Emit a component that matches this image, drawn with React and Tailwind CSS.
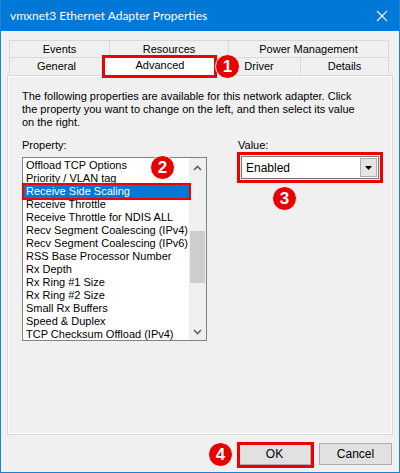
import React from 'react';

const items = [
  'Offload TCP Options',
  'Priority / VLAN tag',
  'Receive Side Scaling',
  'Receive Throttle',
  'Receive Throttle for NDIS ALL',
  'Recv Segment Coalescing (IPv4)',
  'Recv Segment Coalescing (IPv6)',
  'RSS Base Processor Number',
  'Rx Depth',
  'Rx Ring #1 Size',
  'Rx Ring #2 Size',
  'Small Rx Buffers',
  'Speed & Duplex',
  'TCP Checksum Offload (IPv4)',
];

function Badge({ n, className }) {
  return (
    <div className={`absolute w-[25px] h-[25px] rounded-full bg-[#e60000] border border-white text-white flex items-center justify-center text-[17px] font-bold leading-none ${className}`} style={{ fontFamily: '"Liberation Sans", Arial, sans-serif' }}>
      {n}
    </div>
  );
}

function Tab({ label, w, last }) {
  return (
    <div className={`h-[17px] ${w} border-t border-l border-[#d9d9d9] ${last ? 'border-r' : ''} flex items-center justify-center`}>
      {label}
    </div>
  );
}

export default function App() {
  const font = { fontFamily: '"Liberation Sans", Arial, sans-serif' };
  return (
    <div className="w-[400px] h-[473px] bg-[#1883d7] px-px pb-px flex flex-col text-[11px] text-black" style={font}>
      {/* title bar */}
      <div className="h-[31px] bg-[#0078d7] flex items-center justify-between pl-[9px] pr-[11px] text-white">
        <span className="text-[12px]" style={{ fontFamily: 'Lato, "Liberation Sans", sans-serif' }}>vmxnet3 Ethernet Adapter Properties</span>
        <svg width="12" height="12" viewBox="0 0 12 12" stroke="white" strokeWidth="1.1">
          <path d="M1 1L11 11M11 1L1 11" />
        </svg>
      </div>

      <div className="flex-1 bg-[#f0f0f0] flex flex-col pt-[9px] px-[6px]">
        {/* tabs */}
        <div className="px-[2px] flex flex-col">
          <div className="flex">
            <Tab label="Events" w="w-[100px]" />
            <Tab label="Resources" w="w-[119px]" />
            <Tab label="Power Management" w="w-[161px]" last />
          </div>
          <div className="flex">
            <Tab label="General" w="w-[94px]" />
            <div className="relative w-[114px] h-[17px]">
              <div className="absolute left-0 right-0 top-[-1px] h-[20px] bg-white border-t border-l border-r border-[#d9d9d9] flex items-center justify-center z-10 pb-[3px]">
                Advanced
              </div>
              <div className="absolute left-[-1px] top-[-2px] w-[115px] h-[23px] border-[3px] border-[#ee0000] z-20" />
              <Badge n="1" className="left-[112px] top-[-3px] z-30" />
            </div>
            <Tab label="Driver" w="w-[83px]" />
            <Tab label="Details" w="w-[89px]" last />
          </div>
        </div>

        {/* panel */}
        <div className="h-[360px] mt-px border border-[#d9d9d9] shadow-[inset_1px_1px_0_#ffffff,inset_-1px_-1px_0_#ffffff] pt-[14px] pl-[14px] pr-[12px] flex flex-col">
          <p className="leading-[13px] whitespace-nowrap">
            The following properties are available for this network adapter. Click<br />
            the property you want to change on the left, and then select its value<br />
            on the right.
          </p>

          <div className="flex mt-[10px]">
            <div className="flex flex-col">
              <div className="leading-[13px] h-[13px]">Property:</div>
              <div className="relative mt-[5px] w-[185px] h-[184px] border border-[#828282] bg-white flex">
                <div className="flex-1 flex flex-col pt-[1px]">
                  {items.map((it, i) => (
                    <div key={it} className={`h-[13px] leading-[13px] pl-[3px] whitespace-nowrap ${i === 2 ? 'bg-[#0078d7] text-white' : ''}`}>
                      {it}
                    </div>
                  ))}
                </div>
                <div className="w-[17px] bg-[#f0f0f0] flex flex-col items-center">
                  <div className="h-[17px] flex items-center justify-center mt-[1px]">
                    <svg width="9" height="6" viewBox="0 0 9 6" fill="none" stroke="#606060" strokeWidth="1.6"><path d="M1 5L4.5 1.5L8 5" /></svg>
                  </div>
                  <div className="mt-[55px] w-[15px] h-[52px] bg-[#cdcdcd]" />
                  <div className="flex-1" />
                  <div className="h-[17px] flex items-center justify-center">
                    <svg width="9" height="6" viewBox="0 0 9 6" fill="none" stroke="#606060" strokeWidth="1.6"><path d="M1 1L4.5 4.5L8 1" /></svg>
                  </div>
                </div>
                <div className="absolute left-[-1px] top-[25px] w-[169px] h-[17px] border-[2px] border-[#ee0000]" />
                <Badge n="2" className="left-[127px] top-[-3px]" />
              </div>
            </div>

            <div className="ml-[30px] flex flex-col">
              <div className="leading-[13px] h-[13px] ml-px">Value:</div>
              <div className="relative mt-[0px] w-[146px] h-[31px] border-[3px] border-[#ee0000] p-px">
                <div className="h-full border border-[#7a7a7a] bg-white flex items-center pl-[4px] pr-px">
                  <span className="flex-1 text-[12px]">Enabled</span>
                  <div className="w-[17px] h-[19px] bg-[#e5e5e5] border border-[#adadad] flex items-center justify-center">
                    <svg width="7" height="4" viewBox="0 0 7 4"><path d="M0 0H7L3.5 4Z" fill="#000" /></svg>
                  </div>
                </div>
                <Badge n="3" className="left-[32px] top-[31px]" />
              </div>
            </div>
          </div>
        </div>

        {/* buttons */}
        <div className="flex justify-end gap-[8px] mt-[8px] pr-px">
          <div className="relative w-[73px] h-[22px] bg-[#e1e1e1] border border-[#adadad] flex items-center justify-center text-[12px]">
            OK
            <div className="absolute left-[-2px] top-[-2px] w-[77px] h-[26px] border-[3px] border-[#ee0000]" />
            <Badge n="4" className="left-[-31px] top-[-2px]" />
          </div>
          <div className="w-[73px] h-[22px] bg-[#e1e1e1] border border-[#adadad] flex items-center justify-center text-[12px]">
            Cancel
          </div>
        </div>
      </div>
    </div>
  );
}
